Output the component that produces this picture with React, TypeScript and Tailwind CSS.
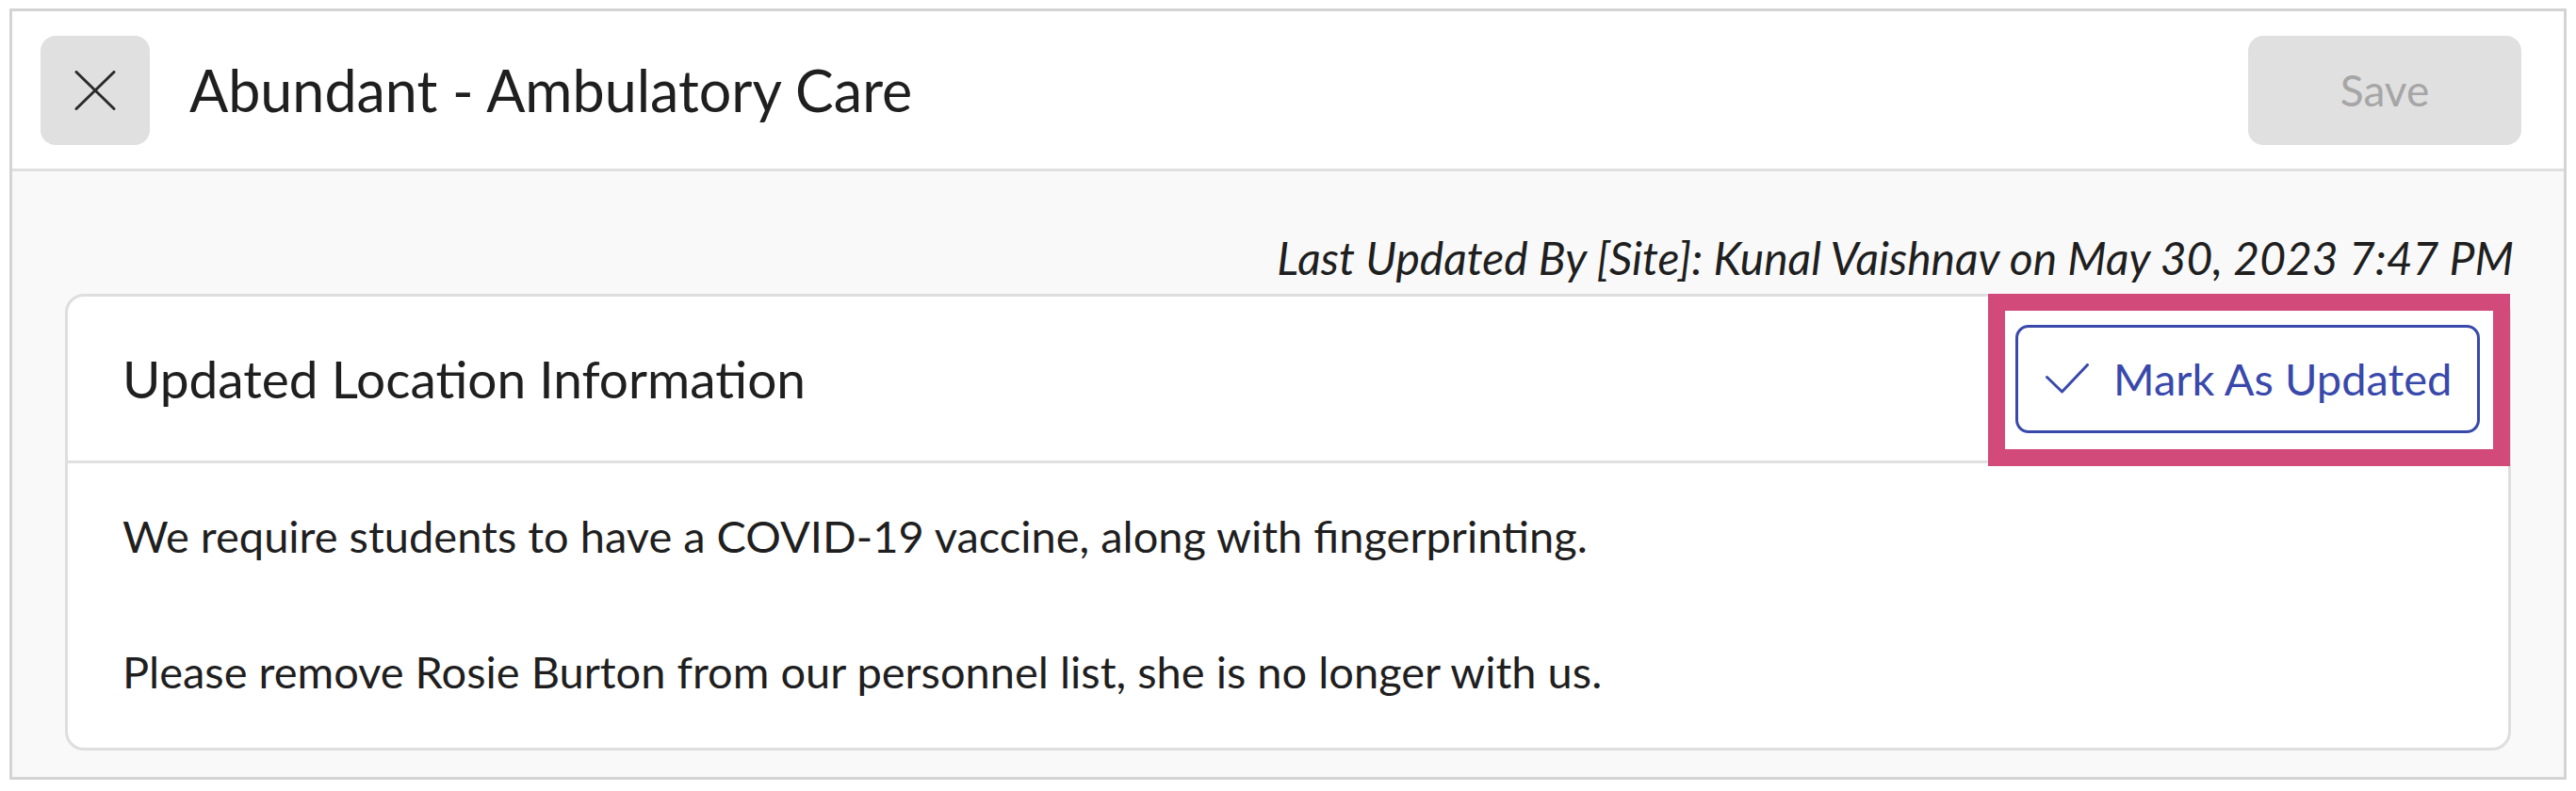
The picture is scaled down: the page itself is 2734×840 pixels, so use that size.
import React from 'react';

const CloseIcon = () => (
  <svg width="44" height="42" viewBox="0 0 44 42" fill="none">
    <path d="M2 1.5L42 40.5M42 1.5L2 40.5" stroke="#2b2b2b" strokeWidth="3" strokeLinecap="round" />
  </svg>
);

const CheckIcon = () => (
  <svg width="46" height="32" viewBox="0 0 46 32" fill="none">
    <path d="M1.5 14.5L17.5 30L44.5 1.5" stroke="#3949ab" strokeWidth="3" strokeLinecap="round" strokeLinejoin="round" />
  </svg>
);

export default function App() {
  return (
    <div className="min-h-screen bg-white px-[10px] pt-[9px] pb-[10px] font-[Lato,sans-serif] text-[#1f1f1f]">
      <div className="border-[3px] border-[#d4d4d4] bg-[#f9f9f9]">
        {/* Header */}
        <div className="h-[167px] box-content bg-white border-b-[3px] border-[#e0e0e0] flex items-center pl-[30px] pr-[45px]">
          <button className="w-[116px] h-[116px] rounded-[16px] bg-[#e0e0e0] flex items-center justify-center">
            <CloseIcon />
          </button>
          <h1 className="ml-[42px] text-[61px] leading-none">Abundant - Ambulatory Care</h1>
          <button className="ml-auto w-[290px] h-[116px] rounded-[16px] bg-[#e0e0e0] text-[#a6a6a6] text-[46px] leading-none">
            Save
          </button>
        </div>

        {/* Body */}
        <div className="px-[56px] pt-[64px] pb-[28px]">
          <p className="text-right italic text-[48px] leading-[56px] mb-[10px] -mr-[3px]">
            Last Updated By [Site]: Kunal Vaishnav on May 30, 2023 7:47 PM
          </p>

          <div className="border-[3px] border-[#dedede] rounded-[20px] bg-white">
            <div className="h-[174px] box-content border-b-[3px] border-[#e0e0e0] flex items-center justify-between pl-[58px] pr-[30px]">
              <h2 className="text-[55px] leading-none">Updated Location Information</h2>
              <div className="relative">
                <span className="absolute -left-[29px] -right-[32px] -top-[33px] -bottom-[35px] border-[18px] border-[#d24a79] bg-white" />
                <button className="relative z-10 w-[493px] h-[115px] border-[3px] border-[#3949ab] rounded-[14px] bg-white flex items-center pl-[29px] gap-[26px] text-[#3949ab] text-[47px] leading-none whitespace-nowrap">
                  <CheckIcon />
                  <span>Mark As Updated</span>
                </button>
              </div>
            </div>
            <div className="px-[58px] pt-[41px] pb-[45px] text-[47px] leading-[72px]">
              <p>We require students to have a COVID-19 vaccine, along with fingerprinting.</p>
              <br />
              <p>Please remove Rosie Burton from our personnel list, she is no longer with us.</p>
            </div>
          </div>
        </div>
      </div>
    </div>
  );
}
